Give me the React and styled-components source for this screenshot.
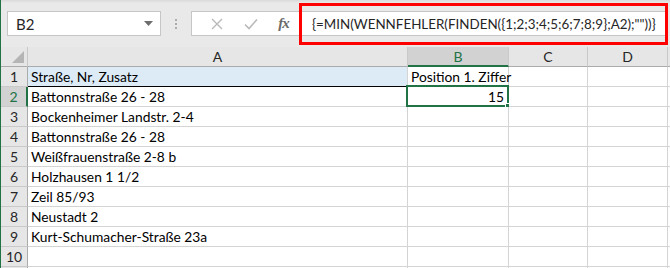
import React from "react";
import styled, { createGlobalStyle } from "styled-components";

const GlobalStyle = createGlobalStyle`
  html, body {
    margin: 0;
    padding: 0;
    background: #ffffff;
  }
`;

const columns = [
  { key: "A", width: 380 },
  { key: "B", width: 101 },
  { key: "C", width: 79 },
  { key: "D", width: 80 },
  { key: "", width: 80 },
];

const rows = [
  ["Straße, Nr, Zusatz", "Position 1. Ziffer"],
  ["Battonnstraße 26 - 28", "15"],
  ["Bockenheimer Landstr. 2-4", ""],
  ["Battonnstraße 26 - 28", ""],
  ["Weißfrauenstraße 2-8 b", ""],
  ["Holzhausen 1 1/2", ""],
  ["Zeil 85/93", ""],
  ["Neustadt 2", ""],
  ["Kurt-Schumacher-Straße 23a", ""],
  ["", ""],
  ["", ""],
];

const formula = '{=MIN(WENNFEHLER(FINDEN({1;2;3;4;5;6;7;8;9};A2);""))}';

export default function App() {
  return (
    <>
      <GlobalStyle />
      <Window>
        <FormulaBar>
          <NameBox>
            <span>B2</span>
            <svg width="9" height="5" viewBox="0 0 9 5">
              <path d="M0 0h9L4.5 5z" fill="#6d6d6d" />
            </svg>
          </NameBox>
          <Grip>
            <i />
            <i />
            <i />
          </Grip>
          <FormulaInput>
            <Buttons>
              <svg width="12" height="12" viewBox="0 0 12 12">
                <path d="M1 1l10 10M11 1L1 11" stroke="#b9b9b9" strokeWidth="1.4" />
              </svg>
              <svg width="14" height="12" viewBox="0 0 14 12">
                <path d="M1 6.5l4 4L13 1.5" stroke="#b9b9b9" strokeWidth="1.6" fill="none" />
              </svg>
              <Fx>fx</Fx>
            </Buttons>
            <FormulaText>{formula}</FormulaText>
          </FormulaInput>
          <Annotation />
        </FormulaBar>

        <Sheet>
          <HeadRow>
            <Corner>
              <svg width="12" height="12" viewBox="0 0 12 12">
                <path d="M12 0v12H0z" fill="#b5b5b5" />
              </svg>
            </Corner>
            {columns.map((c, i) => (
              <ColHead key={i} $w={c.width} $active={c.key === "B"}>
                {c.key}
              </ColHead>
            ))}
          </HeadRow>
          {rows.map((r, i) => (
            <Row key={i}>
              <RowHead $active={i === 1}>{i < 10 ? i + 1 : ""}</RowHead>
              <Cell $w={380} $title={i === 0}>
                {r[0]}
              </Cell>
              <Cell $w={101} $num={i === 1}>
                {i === 0 ? <Overflow>{r[1]}</Overflow> : r[1]}
                {i === 1 && (
                  <Selection>
                    <Handle />
                  </Selection>
                )}
              </Cell>
              <Cell $w={79} />
              <Cell $w={80} />
              <Cell $w={80} />
            </Row>
          ))}
        </Sheet>
      </Window>
    </>
  );
}

const Window = styled.div`
  width: 670px;
  height: 268px;
  overflow: hidden;
  border-left: 1px solid #217346;
  box-sizing: border-box;
  font-family: Lato, "Open Sans", sans-serif;
  background: #ffffff;
`;

const FormulaBar = styled.div`
  position: relative;
  height: 47px;
  box-sizing: border-box;
  padding: 11px 0 0 6px;
  display: flex;
  align-items: flex-start;
  background: linear-gradient(#d9d9d9 0, #e9e9e9 3px, #e9e9e9 100%);
`;

const NameBox = styled.div`
  flex: none;
  width: 154px;
  height: 25px;
  box-sizing: border-box;
  border: 1px solid #c6c6c6;
  background: #ffffff;
  display: flex;
  align-items: center;
  justify-content: space-between;
  padding: 0 7px 0 8px;
  font-size: 15px;
  color: #262626;
`;

const Grip = styled.div`
  flex: none;
  width: 30px;
  height: 25px;
  display: flex;
  flex-direction: column;
  align-items: center;
  justify-content: center;
  gap: 2px;

  i {
    display: block;
    width: 2px;
    height: 2px;
    background: #acacac;
  }
`;

const FormulaInput = styled.div`
  flex: none;
  width: 475px;
  height: 25px;
  box-sizing: border-box;
  border: 1px solid #c6c6c6;
  background: #ffffff;
  display: flex;
  align-items: center;
  overflow: hidden;
`;

const Buttons = styled.div`
  flex: none;
  width: 107px;
  display: flex;
  align-items: center;
  justify-content: space-around;
  padding: 0 0 0 9px;
  box-sizing: border-box;
`;

const Fx = styled.span`
  font-family: "Liberation Serif", serif;
  font-style: italic;
  font-weight: bold;
  font-size: 15px;
  color: #6a6a6a;
  letter-spacing: -1px;
`;

const FormulaText = styled.span`
  padding-left: 13px;
  font-size: 13.4px;
  color: #262626;
  white-space: nowrap;
`;

const Annotation = styled.div`
  position: absolute;
  left: 298px;
  top: 3px;
  width: 369px;
  height: 42px;
  box-sizing: border-box;
  border: 3px solid #ff0000;
  pointer-events: none;
`;

const Sheet = styled.div`
  display: flex;
  flex-direction: column;
`;

const HeadRow = styled.div`
  display: flex;
  height: 20px;
  background: #e6e6e6;
`;

const Corner = styled.div`
  flex: none;
  width: 27px;
  box-sizing: border-box;
  border-right: 1px solid #c9c9c9;
  border-bottom: 1px solid #ababab;
  display: flex;
  align-items: flex-end;
  justify-content: flex-end;
  padding: 0 3px 3px 0;
`;

const ColHead = styled.div`
  flex: none;
  width: ${(p) => p.$w}px;
  box-sizing: border-box;
  border-right: 1px solid #c9c9c9;
  border-bottom: ${(p) => (p.$active ? "2px solid #217346" : "1px solid #ababab")};
  background: ${(p) => (p.$active ? "#d2d2d2" : "#e6e6e6")};
  color: ${(p) => (p.$active ? "#217346" : "#262626")};
  font-size: 14px;
  display: flex;
  align-items: center;
  justify-content: center;
`;

const Row = styled.div`
  display: flex;
  height: 20px;
  flex: none;
`;

const RowHead = styled.div`
  width: 27px;
  flex: none;
  box-sizing: border-box;
  border-right: ${(p) => (p.$active ? "2px solid #217346" : "1px solid #ababab")};
  border-bottom: 1px solid #c9c9c9;
  background: ${(p) => (p.$active ? "#d2d2d2" : "#e6e6e6")};
  color: ${(p) => (p.$active ? "#217346" : "#262626")};
  font-size: 14px;
  display: flex;
  align-items: center;
  justify-content: center;
`;

const Cell = styled.div`
  position: relative;
  flex: none;
  width: ${(p) => p.$w}px;
  box-sizing: border-box;
  border-right: 1px solid #d4d4d4;
  border-bottom: 1px solid ${(p) => (p.$title ? "#000000" : "#d4d4d4")};
  background: ${(p) => (p.$title ? "#ddebf7" : "#ffffff")};
  font-size: 13.8px;
  color: #000000;
  display: flex;
  align-items: center;
  justify-content: ${(p) => (p.$num ? "flex-end" : "flex-start")};
  padding: 0 4px 0 3px;
  white-space: nowrap;
`;

const Overflow = styled.span`
  position: relative;
  z-index: 1;
`;

const Selection = styled.div`
  position: absolute;
  top: -2px;
  left: -2px;
  right: -1px;
  bottom: -1px;
  border: 2px solid #217346;
  pointer-events: none;
`;

const Handle = styled.div`
  position: absolute;
  right: -5px;
  bottom: -5px;
  width: 5px;
  height: 5px;
  background: #217346;
  border: 1px solid #ffffff;
`;
